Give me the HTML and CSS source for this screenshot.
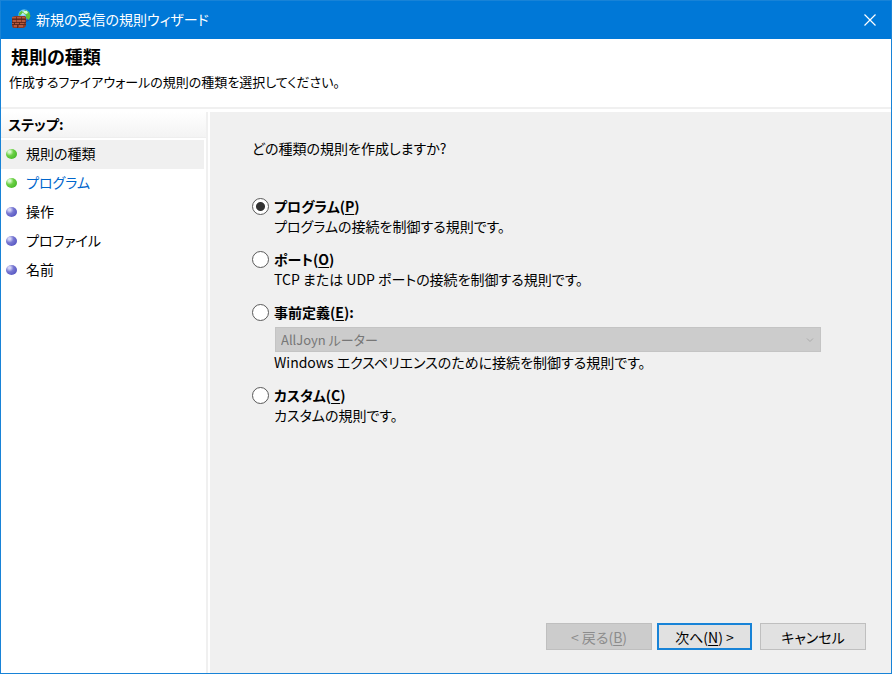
FILE: index.html
```html
<!DOCTYPE html>
<html lang="ja">
<head>
<meta charset="utf-8">
<meta name="viewport" content="width=device-width, initial-scale=1">
<title>新規の受信の規則ウィザード</title>
<link rel="stylesheet" href="styles.css">
</head>
<body>
<div class="window">
  <div class="titlebar">
    <svg class="app-icon" viewBox="0 0 20 20" aria-hidden="true">
      <defs>
        <radialGradient id="globe" cx=".4" cy=".3" r=".75">
          <stop offset="0" stop-color="#e4fbff"/><stop offset=".45" stop-color="#45b4ed"/><stop offset="1" stop-color="#0a3fa6"/>
        </radialGradient>
      </defs>
      <circle cx="13.300" cy="6.700" r="6.400" fill="url(#globe)"/>
      <path d="M14 1l4 2 1.500 4-1.500 4-3-2 0-3-3-2zM8 4l3-2.500 1 2-3 3-1 0z" fill="#5cc63c"/>
      <path d="M13 2l3 0 1 2-2 1-2-1z" fill="#d9ffd0"/>
      <path d="M1 8l3-1 10 0 1 1v9l-2 2H2l-1-2z" fill="#8d3b27"/>
      <path d="M1 8h13v1H1zM2 11h3v2H2zM6 11h4v2H6zM11 11h3v2h-3zM1 14h2v1H1zM4 14h4v1H4zM9 14h4v1H9zM3 16h3v2H3zM8 16h4v2H8z" fill="#b65b40"/>
      <path d="M1 10.500h14M1 13.500h14M1 15.500h14M5.500 8v3M10.500 8v3M3.500 13v3M8.500 13v3M6.500 16v3" stroke="#552319" stroke-width=".7" fill="none"/>
    </svg>
    <span class="window-title">新規の受信の規則ウィザード</span>
    <button class="close" type="button" aria-label="閉じる">
      <svg viewBox="0 0 12 12" aria-hidden="true"><path d="M.5.5l11 11M11.500.5l-11 11" stroke="#fff" stroke-width="1.200"/></svg>
    </button>
  </div>
  <header class="page-head">
    <h1>規則の種類</h1>
    <p>作成するファイアウォールの規則の種類を選択してください。</p>
  </header>
  <div class="body">
    <nav class="sidebar" aria-labelledby="steps-title">
      <h2 id="steps-title">ステップ:</h2>
      <ol class="steps">
        <li class="step current" aria-current="step"><span class="dot green"></span>規則の種類</li>
        <li class="step"><span class="dot green"></span><a href="#program">プログラム</a></li>
        <li class="step"><span class="dot"></span>操作</li>
        <li class="step"><span class="dot"></span>プロファイル</li>
        <li class="step"><span class="dot"></span>名前</li>
      </ol>
    </nav>
    <form class="content">
      <fieldset class="choices">
        <legend>どの種類の規則を作成しますか?</legend>
        <div class="choice">
          <input type="radio" name="type" id="program" aria-describedby="program-note" checked>
          <label for="program">プログラム(<u>P</u>)</label>
          <p id="program-note">プログラムの接続を制御する規則です。</p>
        </div>
        <div class="choice">
          <input type="radio" name="type" id="port" aria-describedby="port-note">
          <label for="port">ポート(<u>O</u>)</label>
          <p id="port-note">TCP または UDP ポートの接続を制御する規則です。</p>
        </div>
        <div class="choice">
          <input type="radio" name="type" id="predefined" aria-describedby="predefined-note">
          <label for="predefined">事前定義(<u>E</u>):</label>
          <div class="select-wrap">
            <select aria-labelledby="predefined-note" disabled><option>AllJoyn ルーター</option></select>
            <svg class="chevron" viewBox="0 0 8 5" aria-hidden="true"><path d="M1 .5l3 3 3-3" fill="none" stroke="#aaa"/></svg>
          </div>
          <p id="predefined-note">Windows エクスペリエンスのために接続を制御する規則です。</p>
        </div>
        <div class="choice">
          <input type="radio" name="type" id="custom" aria-describedby="custom-note">
          <label for="custom">カスタム(<u>C</u>)</label>
          <p id="custom-note">カスタムの規則です。</p>
        </div>
      </fieldset>
      <div class="actions">
        <button class="btn" type="button" disabled>&lt; 戻る(<u>B</u>)</button>
        <button class="btn primary" type="submit">次へ(<u>N</u>) &gt;</button>
        <button class="btn cancel" type="button">キャンセル</button>
      </div>
    </form>
  </div>
</div>
</body>
</html>
```
FILE: styles.css
```css
* { box-sizing: border-box; }

body {
  margin: 0;
  font: 14px/20px "Noto Sans CJK JP", sans-serif;
  font-feature-settings: "palt";
  color: #000;
}

h1, h2, p, ol { margin: 0; padding: 0; }

button, select {
  font: inherit;
  font-feature-settings: inherit;
  color: inherit;
}

.window {
  display: flex;
  flex-direction: column;
  min-height: 100vh;
  border: 1px solid #1883d7;
  background: #fff;
}

.titlebar {
  display: flex;
  align-items: center;
  height: 38px;
  padding: 0 0 2px 10px;
  background: #0078d7;
  color: #fff;
}

.app-icon { width: 20px; height: 20px; margin-right: 5px; }

.window-title { flex: 1; }

.close {
  display: grid;
  place-items: center;
  width: 42px;
  height: 36px;
  padding: 2px 0 0;
  border: 0;
  background: none;
}

.close svg { width: 12px; height: 12px; }

.page-head {
  padding: 3px 8px 12px;
  border-bottom: 2px solid #f0f0f0;
}

.page-head h1 {
  padding-left: 2px;
  font-size: 18px;
  line-height: 28px;
}

.page-head p {
  padding-bottom: 1px;
  font-size: 13px;
  line-height: 24px;
}

.body {
  display: flex;
  flex: 1;
  padding-top: 3px;
}

.sidebar {
  flex: none;
  width: 207px;
  border-right: 2px solid #f0f0f0;
}

.sidebar h2 {
  padding-left: 7px;
  border-bottom: 1px solid #eee;
  background: linear-gradient(#fff, #f3f3f3);
  font-size: 14px;
  line-height: 25px;
}

.steps {
  margin: 2px 2px 0 0;
  list-style: none;
}

.step {
  display: flex;
  align-items: center;
  gap: 9px;
  height: 29px;
  padding: 0 0 4px 5px;
}

.step.current { background: #f0f0f0; }

.step a { color: #0066cc; text-decoration: none; }

.dot {
  width: 11px;
  height: 10px;
  margin-top: 2px;
  border-radius: 50%;
  background: radial-gradient(circle at 32% 28%, #d4d4f6 0 10%, #7878d2 38%, #5a5ac4 75%, #9a9adf);
}

.dot.green {
  background: radial-gradient(circle at 32% 28%, #d8f8cc 0 10%, #6cd045 38%, #4cbc2c 75%, #96df7c);
}

.content {
  display: flex;
  flex: 1;
  flex-direction: column;
  justify-content: space-between;
  margin-left: 2px;
  padding: 26px 25px 23px 42px;
  background: #f0f0f0;
}

.choices {
  margin: 0;
  padding: 0;
  border: 0;
}

.choices legend {
  margin-bottom: 38px;
  padding: 0;
}

.choice {
  display: grid;
  grid-template-columns: 18px 1fr;
  column-gap: 4px;
  align-items: center;
  margin-bottom: 13px;
}

.choice label {
  justify-self: start;
  font-weight: bold;
}

.choice p, .select-wrap { grid-column: 2; }

.choice input {
  appearance: none;
  width: 17px;
  height: 17px;
  margin: 0;
  border: 1px solid #5a5a5a;
  border-radius: 50%;
  background: #fff;
}

.choice input:checked {
  background: radial-gradient(circle, #333 0 4px, #fff 5px);
}

.select-wrap {
  position: relative;
  margin: 5px 45px 0 1px;
}

.select-wrap select {
  appearance: none;
  display: block;
  width: 100%;
  height: 25px;
  padding: 0 5px;
  border: 1px solid #c4c4c4;
  border-radius: 0;
  background: #ccc;
  color: #777;
  opacity: 1;
  font-size: 13px;
}

.chevron {
  position: absolute;
  top: 11px;
  right: 7px;
  width: 8px;
  height: 5px;
}

.actions {
  display: flex;
  justify-content: flex-end;
  gap: 5px;
}

.btn {
  width: 106px;
  height: 27px;
  padding: 0;
  border: 1px solid #bfbfbf;
  background: #e1e1e1;
  line-height: 20px;
}

.btn:disabled { background: #ccc; color: #8c8c8c; }

.btn.primary {
  width: 95px;
  border: 2px solid #1883d7;
}

.btn.cancel { margin-left: 3px; }

u { text-underline-offset: 2px; }
```
